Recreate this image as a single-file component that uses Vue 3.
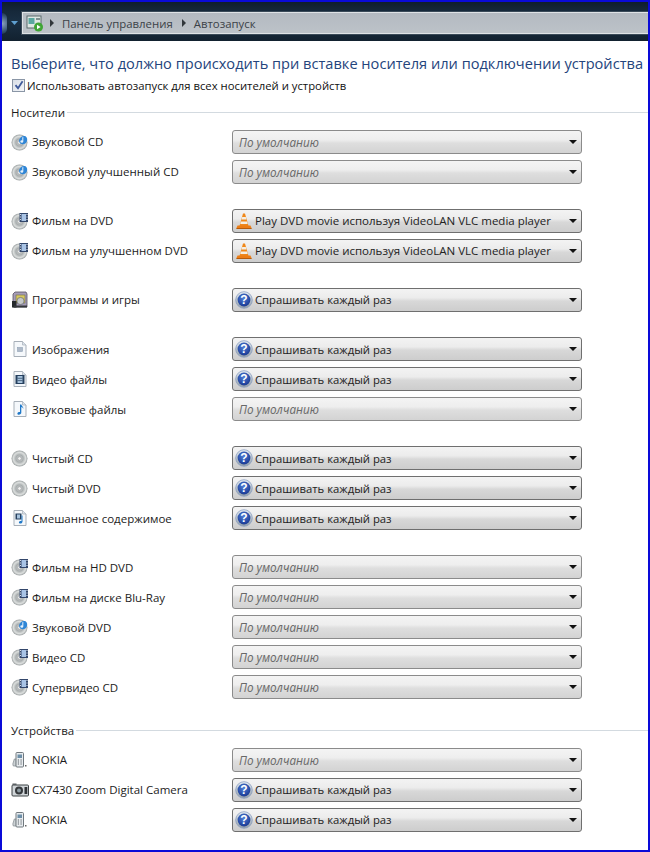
<script setup>
const ASK = { kind: 'ask', text: 'Спрашивать каждый раз' }
const DEF = { kind: 'def', text: 'По умолчанию' }
const VLC = { kind: 'vlc', text: 'Play DVD movie используя VideoLAN VLC media player' }

const media = [
  [
    { icon: 'disc-music', label: 'Звуковой CD', value: DEF },
    { icon: 'disc-music', label: 'Звуковой улучшенный CD', value: DEF }
  ],
  [
    { icon: 'disc-film', label: 'Фильм на DVD', value: VLC },
    { icon: 'disc-film', label: 'Фильм на улучшенном DVD', value: VLC }
  ],
  [{ icon: 'games', label: 'Программы и игры', value: ASK }],
  [
    { icon: 'doc-image', label: 'Изображения', value: ASK },
    { icon: 'doc-video', label: 'Видео файлы', value: ASK },
    { icon: 'doc-audio', label: 'Звуковые файлы', value: DEF }
  ],
  [
    { icon: 'disc', label: 'Чистый CD', value: ASK },
    { icon: 'disc', label: 'Чистый DVD', value: ASK },
    { icon: 'doc-mixed', label: 'Смешанное содержимое', value: ASK }
  ],
  [
    { icon: 'disc-film', label: 'Фильм на HD DVD', value: DEF },
    { icon: 'disc-film', label: 'Фильм на диске Blu-Ray', value: DEF },
    { icon: 'disc-music', label: 'Звуковой DVD', value: DEF },
    { icon: 'disc-film', label: 'Видео CD', value: DEF },
    { icon: 'disc-film', label: 'Супервидео CD', value: DEF }
  ]
]

const devices = [
  [
    { icon: 'phone', label: 'NOKIA', value: DEF },
    { icon: 'camera', label: 'CX7430 Zoom Digital Camera', value: ASK },
    { icon: 'phone', label: 'NOKIA', value: ASK }
  ]
]

const sections = [
  { title: 'Носители', groups: media, cls: 'sec-media' },
  { title: 'Устройства', groups: devices, cls: 'sec-devices' }
]
</script>

<template>
  <div class="window">
    <svg class="defs" width="0" height="0" aria-hidden="true">
      <defs>
        <radialGradient id="discG" cx="50%" cy="50%" r="55%">
          <stop offset="0" stop-color="#eeeeee" />
          <stop offset="0.4" stop-color="#a8adae" />
          <stop offset="0.7" stop-color="#dcdfde" />
          <stop offset="1" stop-color="#7f8587" />
        </radialGradient>
        <radialGradient id="askG" cx="45%" cy="35%" r="70%">
          <stop offset="0" stop-color="#4f7ed6" />
          <stop offset="1" stop-color="#16348f" />
        </radialGradient>
        <linearGradient id="fieldG" x1="0" y1="0" x2="0" y2="1">
          <stop offset="0" stop-color="#e4ecf3" />
          <stop offset="1" stop-color="#8f9ca6" />
        </linearGradient>
        <symbol id="disc" viewBox="0 0 18 18">
          <circle cx="8.5" cy="9.5" r="8" fill="url(#discG)" />
          <circle cx="8.5" cy="9.5" r="1.8" fill="#f4f4f4" stroke="#8b9092" stroke-width=".6" />
        </symbol>
      </defs>
    </svg>

    <header class="navbar">
      <span class="orb"></span>
      <svg class="nav-drop" width="7" height="5" viewBox="0 0 7 5"><path d="M0 0h7L3.5 4z" fill="#5f9fd0" /></svg>
      <div class="crumbs">
        <svg class="crumb-icon" width="18" height="18" viewBox="0 0 18 18">
          <rect x="1" y="2" width="14" height="12" fill="#dfe7e4" stroke="#5b6b6c" />
          <rect x="2.5" y="4" width="6" height="6" fill="#5aa7a0" />
          <rect x="10" y="4" width="4" height="2" fill="#7f8f90" />
          <circle cx="12.5" cy="13" r="4.5" fill="#3fa535" />
          <path d="M11 10.7v4.6l3.6-2.3z" fill="#fff" />
        </svg>
        <span class="tri"></span>
        <span class="crumb">Панель управления</span>
        <span class="tri"></span>
        <span class="crumb">Автозапуск</span>
      </div>
    </header>

    <main class="content">
      <h1 class="title">Выберите, что должно происходить при вставке носителя или подключении устройства</h1>
      <label class="use-all">
        <span class="check">
          <svg width="10" height="10" viewBox="0 0 10 10"><path d="M1.5 5.2 4 8.2 8.6 1.2" fill="none" stroke="#3f5a9a" stroke-width="1.8" /></svg>
        </span>
        <span>Использовать автозапуск для всех носителей и устройств</span>
      </label>

      <section v-for="s in sections" :key="s.title" class="section" :class="s.cls">
        <div class="sec-head"><span>{{ s.title }}</span><i class="rule"></i></div>
        <div class="groups">
          <div v-for="(g, gi) in s.groups" :key="gi" class="group">
            <div v-for="(r, ri) in g" :key="ri" class="row">
              <div class="label">
                <svg class="icon" width="18" height="18" viewBox="0 0 18 18">
                  <template v-if="r.icon.startsWith('disc')">
                    <use href="#disc" width="18" height="18" />
                  </template>
                  <template v-if="r.icon === 'disc-music'">
                    <path d="M8 8C8.300 4.500 11.500 2 14.500 3.200 16.800 4.700 16.800 8.500 14.300 10.500 12 12 8.500 11.200 8 8z" fill="#2f86d6" />
                    <path d="M12.300 3.800v4.700a1.500 1.200 0 1 1-1-1.100V4.500z" fill="#e6f1fb" />
                  </template>
                  <template v-if="r.icon === 'disc-film'">
                    <rect x="8.500" y="1" width="8.500" height="9" fill="#33476b" />
                    <rect x="10.500" y="2" width="4.500" height="7" fill="#a9c4e6" />
                    <path d="M9.400 2v1M9.400 4.500v1M9.400 7v1M16 2v1M16 4.500v1M16 7v1" stroke="#fff" stroke-width=".9" />
                  </template>
                  <template v-if="r.icon === 'games'">
                    <path d="M2 3 4 1h11l1 2v13H2z" fill="#a69db8" stroke="#55505f" stroke-width=".8" />
                    <rect x="5" y="4" width="9" height="8" fill="#d8c95f" stroke="#6c6a4e" stroke-width=".6" />
                    <circle cx="9.500" cy="10" r="3.600" fill="#c5c8ca" stroke="#595c5e" stroke-width=".6" />
                    <rect x="1" y="10" width="4.500" height="6.500" fill="#24282b" />
                    <rect x="3" y="14.500" width="13" height="2" fill="#33373a" />
                  </template>
                  <template v-if="r.icon.startsWith('doc')">
                    <path d="M3 1.500h8.500L15 5v11.500H3z" fill="#f5f8fb" stroke="#a7afb8" />
                    <path d="M11.500 1.500V5H15" fill="#dce4ec" stroke="#a7afb8" stroke-width=".7" />
                  </template>
                  <rect v-if="r.icon === 'doc-image'" x="6.500" y="7.500" width="5" height="4" fill="#aeb9c8" stroke="#8fa0b5" stroke-width=".6" />
                  <template v-if="r.icon === 'doc-video'">
                    <rect x="4.500" y="5" width="9" height="9" fill="#27415f" />
                    <rect x="6.500" y="6" width="5" height="7" fill="#a8c4de" />
                    <path d="M6.500 8.300h5M6.500 10.600h5" stroke="#27415f" stroke-width=".7" />
                  </template>
                  <path v-if="r.icon === 'doc-audio'" d="M9 4.500h1.300c.2 1.700 2.400 2.300 2 4.500-.4-1.300-1-1.700-2-2v5.500c0 1.500-1.400 2.400-2.800 2.200-1.300-.3-1.500-1.600-.5-2.300.7-.5 1.400-.6 2-.4z" fill="#1f78c8" />
                  <template v-if="r.icon === 'doc-mixed'">
                    <rect x="4.500" y="4.500" width="6" height="6" fill="#27415f" />
                    <rect x="6" y="5.500" width="3" height="4" fill="#a8c4de" />
                    <path d="M10.500 6.500h1v6c0 1.400-1.200 2.200-2.600 2-1.200-.3-1.300-1.400-.5-2 .6-.4 1.300-.5 2.100-.3z" fill="#1f78c8" />
                  </template>
                  <template v-if="r.icon === 'phone'">
                    <path d="M1.800 13l1.500-5h2v7h-3z" fill="#cdd3d6" stroke="#7f878c" stroke-width=".7" />
                    <rect x="5" y="1.500" width="7.500" height="14.500" rx="1" fill="#e8ecef" stroke="#70787e" />
                    <rect x="6.500" y="3.500" width="4.500" height="3.500" fill="#6e8fa8" />
                    <path d="M6.800 9h1.200M9.500 9h1.200M6.800 11h1.200M9.500 11h1.200M6.800 13h1.200M9.500 13h1.200" stroke="#555d62" stroke-width="1" />
                    <rect x="14" y="14" width="1.500" height="1.500" fill="#666" />
                  </template>
                  <template v-if="r.icon === 'camera'">
                    <rect x="1" y="4" width="16.500" height="11" rx="1" fill="#d0d5d8" stroke="#3b4043" />
                    <rect x="1.500" y="2.500" width="4" height="1.500" fill="#5a5f62" />
                    <circle cx="8" cy="9.600" r="4" fill="#35393c" />
                    <circle cx="8" cy="9.600" r="2" fill="#8d9ba2" />
                    <rect x="13.500" y="6" width="2.800" height="7" fill="#2f3336" />
                  </template>
                </svg>
                <span>{{ r.label }}</span>
              </div>
              <div class="select" :class="r.value.kind">
                <svg v-if="r.value.kind === 'ask'" class="opt-icon" width="18" height="18" viewBox="0 0 18 18">
                  <circle cx="9" cy="9" r="8.300" fill="url(#fieldG)" stroke="#8095bd" stroke-width=".7" />
                  <circle cx="9" cy="9" r="6.400" fill="url(#askG)" />
                  <text x="9" y="13" text-anchor="middle" class="q">?</text>
                </svg>
                <svg v-else-if="r.value.kind === 'vlc'" class="opt-icon" width="18" height="18" viewBox="0 0 18 18">
                  <path d="M8 1.500h2l3.500 12.500h-9z" fill="#f0881a" />
                  <path d="M7.200 5h3.600l.6 2.400H6.600zM5.900 9.500h6.200l.6 2.400H5.300z" fill="#f5efe4" />
                  <path d="M2.500 13.500h13l1 2.500v1h-15v-1z" fill="#ec7d14" />
                  <path d="M1.500 16.200h15v.8h-15z" fill="#a85309" />
                </svg>
                <span class="opt-text">{{ r.value.text }}</span>
                <span class="arrow"></span>
              </div>
            </div>
          </div>
        </div>
      </section>
    </main>
  </div>
</template>

<style>
html, body { margin: 0; background: #fff; }
</style>

<style scoped>
.window {
  width: 650px;
  height: 852px;
  box-sizing: border-box;
  border: 2px solid #0a0ad8;
  background: #fff;
  overflow: hidden;
  font-family: "Open Sans", "Noto Sans", sans-serif;
  color: #1c1c1c;
  font-size: 11.3px;
}
.defs { position: absolute; }
.navbar {
  height: 39px;
  box-sizing: border-box;
  padding: 10px 0 7px 0;
  display: flex;
  align-items: center;
  background: linear-gradient(#0f1d2c, #16293b 25%, #1a2f43 50%, #12212f);
}
.orb {
  width: 5px;
  height: 21px;
  border-radius: 0 11px 11px 0;
  background: radial-gradient(circle at 0 50%, #8ea6c4, #34506e 70%, #1b2d41);
}
.nav-drop { margin: 0 4px 0 4px; }
.crumbs {
  flex: 1;
  height: 100%;
  box-sizing: border-box;
  padding-left: 3px;
  display: flex;
  align-items: center;
  background: linear-gradient(#b4bac1, #bcc2c8);
  border: 1px solid #dfe3e6;
  border-right: 0;
  outline: 1px solid #3a4a58;
  color: #3b4248;
  font-size: 11.4px;
}
.crumb-icon { margin-right: 6px; }
.tri {
  width: 0;
  height: 0;
  border-left: 4px solid #30363b;
  border-top: 4px solid transparent;
  border-bottom: 4px solid transparent;
  margin-right: 8px;
}
.crumb { margin-right: 9px; }
.content { padding: 10px 0 0 9px; }
.title {
  margin: 0;
  font-size: 14.6px;
  line-height: 24px;
  font-weight: 400;
  color: #24447c;
  white-space: nowrap;
}
.use-all {
  display: flex;
  align-items: center;
  height: 16px;
  margin-top: 2px;
  color: #111;
}
.check {
  width: 11px;
  height: 11px;
  margin: 0 2px 0 1px;
  border: 1px solid #8a96a6;
  background: linear-gradient(135deg, #d9dee6, #f4f6f9);
  display: flex;
  align-items: center;
  justify-content: center;
  flex: none;
}
.section { margin-top: 11px; }
.sec-devices { margin-top: 23px; }
.sec-head {
  display: flex;
  align-items: center;
  height: 16px;
  gap: 2px;
  color: #1c1c1c;
  font-size: 11.5px;
}
.rule { flex: 1; height: 1px; background: #d3dae0; }
.groups {
  margin-top: 9.5px;
  display: flex;
  flex-direction: column;
  gap: 25.2px;
}
.group { display: flex; flex-direction: column; gap: 6px; }
.row {
  display: grid;
  grid-template-columns: 221px 350px;
  align-items: center;
  height: 24px;
}
.label { display: flex; align-items: center; gap: 3px; white-space: nowrap; font-size: 11.5px; }
.icon { flex: none; }
.select {
  height: 24px;
  box-sizing: border-box;
  display: flex;
  align-items: center;
  padding: 0 4px 0 2px;
  border: 1px solid #6f6f6f;
  border-radius: 3px;
  background: linear-gradient(#f3f3f3 0, #ececec 40%, #d8d8d8 55%, #cdcdcd 100%);
  color: #222;
}
.select.def {
  border-color: #8b8b8b;
  color: #686868;
  font-style: italic;
  font-size: 11.7px;
  background: linear-gradient(#f4f4f4 0, #eeeeee 40%, #dedede 55%, #d3d3d3 100%);
}
.select.def .opt-text { padding-left: 4px; }
.select.vlc { font-size: 11.5px; }
.opt-icon { flex: none; margin-right: 2px; }
.opt-text { flex: 1; white-space: nowrap; overflow: hidden; }
.q { font: 700 12px "Liberation Sans", sans-serif; fill: #fff; }
.arrow {
  width: 0;
  height: 0;
  border-top: 4px solid #111;
  border-left: 4px solid transparent;
  border-right: 4px solid transparent;
  flex: none;
}
</style>
